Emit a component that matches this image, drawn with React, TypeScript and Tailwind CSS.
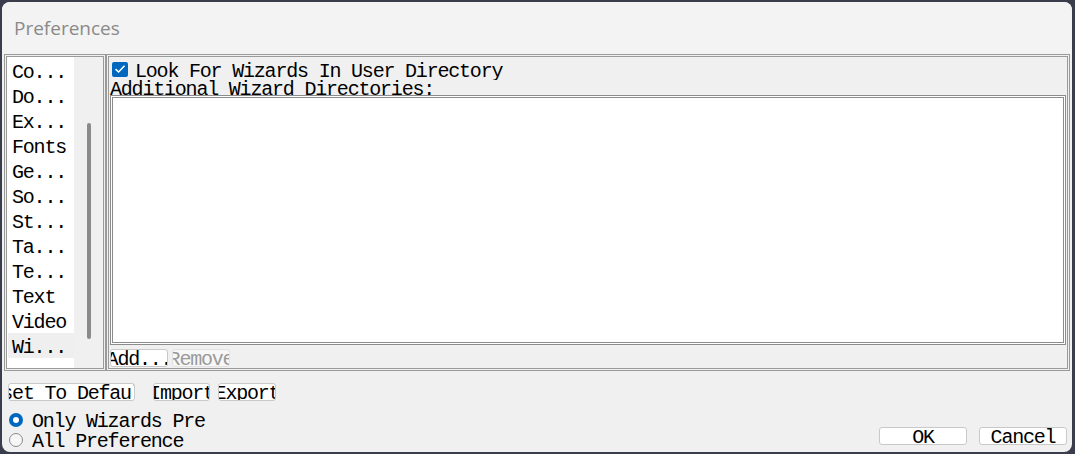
import React from 'react';

const mono = { fontFamily: '"Liberation Mono", "DejaVu Sans Mono", monospace' };

const items = ['Co...', 'Do...', 'Ex...', 'Fonts', 'Ge...', 'So...', 'St...', 'Ta...', 'Te...', 'Text', 'Video', 'Wi...'];

function ClipButton({ label, className, disabled }: { label: string; className: string; disabled?: boolean }) {
  return (
    <div
      className={
        'flex justify-center items-center overflow-hidden whitespace-nowrap rounded-[3px] border h-[18px] ' +
        (disabled ? 'bg-[#f7f7f7] border-[#e2e2e2] text-[#9a9a9a] ' : 'bg-white border-[#c9c9c9] text-black ') +
        className
      }
    >
      <span className="shrink-0 leading-[18px] pt-[3px]">{label}</span>
    </div>
  );
}

export default function App() {
  return (
    <div className="w-[1075px] h-[454px] bg-[#3a3d4b] p-[2px] pr-[3px]">
      <div
        className="h-full rounded-lg bg-[#f0f0f0] flex flex-col overflow-hidden text-[20px] tracking-[-1.2px] text-black"
        style={mono}
      >
        <div
          className="h-[52px] shrink-0 bg-[#f3f3f3] px-[12px] flex items-center text-[19px] tracking-normal text-[#8a8a8a]"
          style={{ fontFamily: '"Open Sans", "Noto Sans", sans-serif' }}
        >
          Preferences
        </div>

        <div className="flex h-[317px] shrink-0 pl-[2px] pr-[2px]">
          {/* category list */}
          <div className="w-[102px] border-[3px] border-double border-[#9a9a9a] flex">
            <div className="w-[67px] bg-white pt-[1px] pl-[1px]">
              {items.map((it) => (
                <div
                  key={it}
                  className={'h-[25px] leading-[25px] pl-[4px] pt-[2px] ' + (it === 'Wi...' ? 'bg-[#efefef]' : '')}
                >
                  {it}
                </div>
              ))}
            </div>
            <div className="flex-1 pt-[66px] pl-[13px]">
              <div className="w-[4px] h-[216px] bg-[#8a8a8a] rounded-full" />
            </div>
          </div>

          {/* wizard settings */}
          <div className="flex-1 border-[3px] border-double border-[#9a9a9a] flex flex-col pl-[1px] pr-[1px]">
            <div className="flex items-center h-[22px] mt-[1px] overflow-hidden">
              <div className="w-[16px] h-[15px] ml-[2px] rounded-[2px] bg-[#0067c0] flex items-center justify-center">
                <svg width="12" height="10" viewBox="0 0 12 10" fill="none">
                  <path d="M1.5 5.2 L4.6 8 L10.5 1.8" stroke="white" strokeWidth="1.6" />
                </svg>
              </div>
              <span className="ml-[7px] whitespace-nowrap leading-[22px] pt-[6px]">Look For Wizards In User Directory</span>
            </div>
            <div className="h-[15px] overflow-hidden whitespace-nowrap leading-[20px]">Additional Wizard Directories:</div>
            <div className="h-[250px] bg-white border-[3px] border-double border-[#8c8c8c]" />
            <div className="flex gap-[4px] mt-[4px]">
              <ClipButton label="Add..." className="w-[58px]" />
              <ClipButton label="Remove" className="w-[58px]" disabled />
            </div>
          </div>
        </div>

        <div className="flex gap-[18px] mt-[12px] pl-[6px]">
          <ClipButton label="Reset To Defaults" className="w-[127px]" />
          <div className="flex gap-[8px]">
            <ClipButton label="Import" className="w-[57px]" />
            <ClipButton label="Export" className="w-[58px]" />
          </div>
        </div>

        <div className="flex mt-[9px]">
          <div className="flex flex-col pl-[7px]">
            <div className="flex items-center h-[20px]">
              <div className="w-[14px] h-[14px] rounded-full bg-[#0067c0] flex items-center justify-center">
                <div className="w-[6px] h-[6px] rounded-full bg-white" />
              </div>
              <span className="ml-[9px] whitespace-nowrap leading-[20px] pt-[4px]">Only Wizards Pre</span>
            </div>
            <div className="flex items-center h-[20px]">
              <div className="w-[14px] h-[14px] rounded-full border border-[#8a8a8a] bg-[#f7f7f7]" />
              <span className="ml-[9px] whitespace-nowrap leading-[20px] pt-[4px]">All Preference</span>
            </div>
          </div>
          <div className="flex-1" />
          <div className="flex gap-[12px] pt-[17px] pr-[5px]">
            <ClipButton label="OK" className="w-[88px]" />
            <ClipButton label="Cancel" className="w-[88px]" />
          </div>
        </div>
      </div>
    </div>
  );
}
